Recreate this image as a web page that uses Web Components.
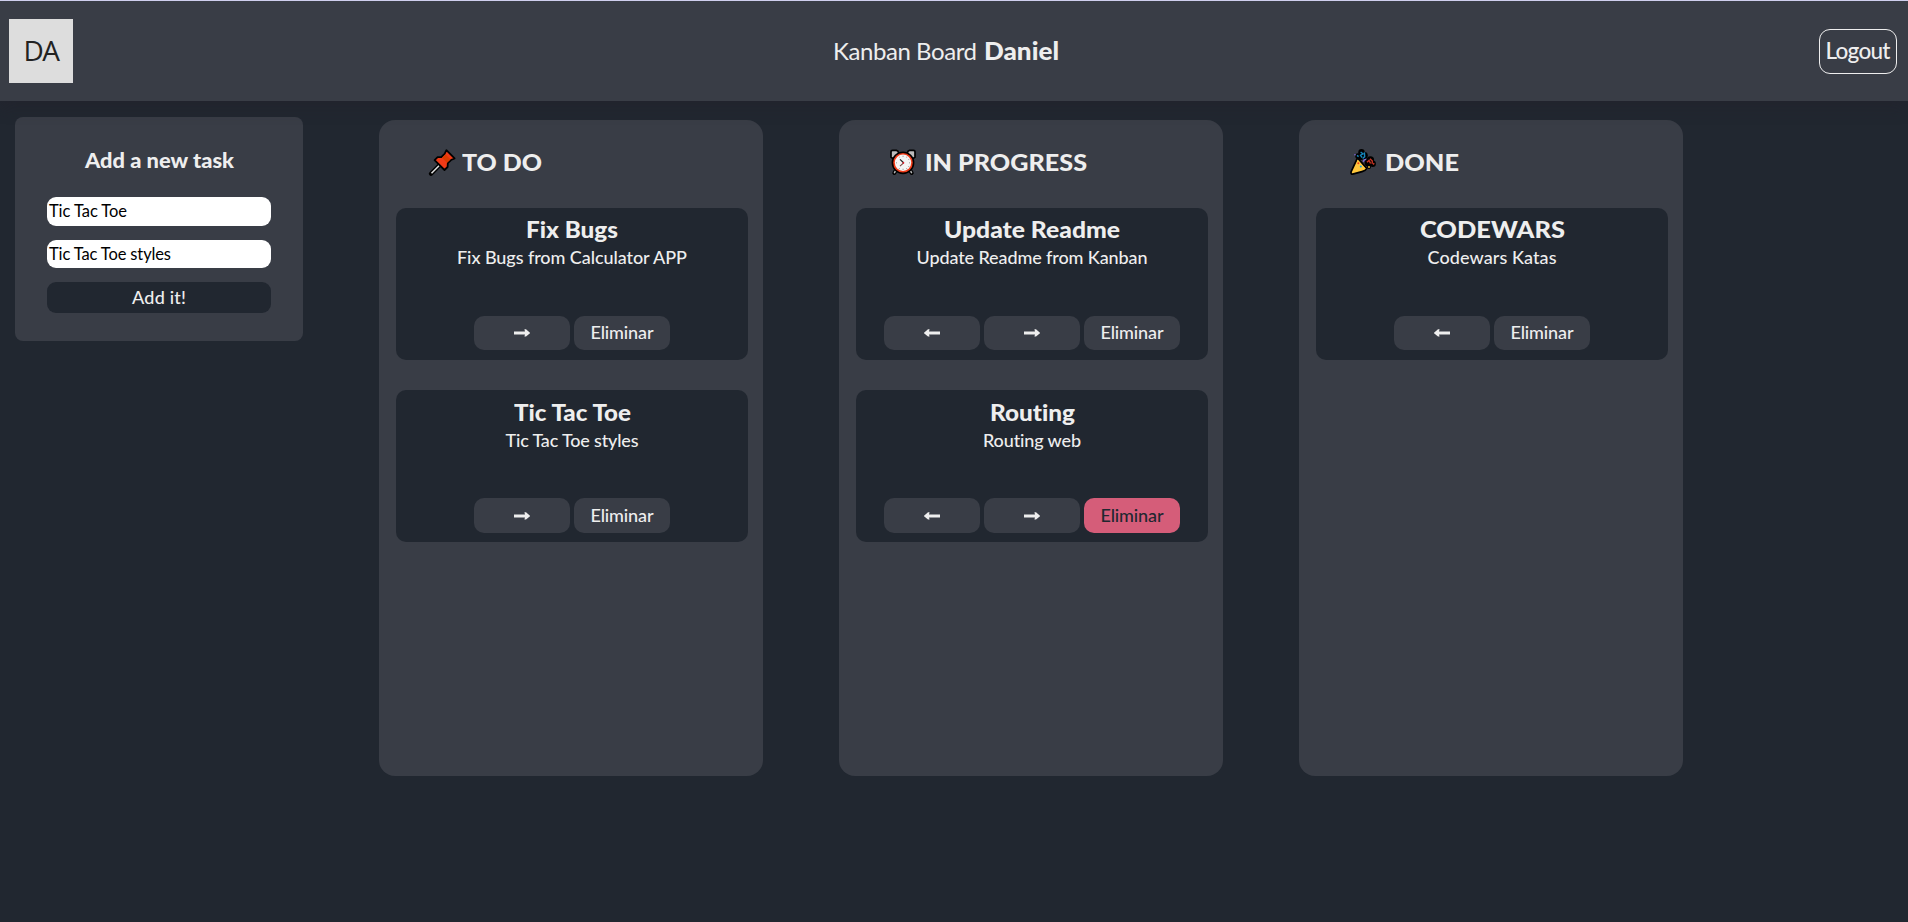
<!DOCTYPE html>
<html lang="es">
<head>
<meta charset="utf-8">
<title>Kanban Board</title>
<style>
html, body { margin: 0; height: 100%; background: #212730; overflow: hidden; }
body { font-family: Lato, "Noto Sans", sans-serif; color: #eee; font-variant-ligatures: none; }
</style>
</head>
<body>
<kanban-app></kanban-app>
<script>
const define = (name, html, setup) => {
  const tpl = document.createElement('template');
  tpl.innerHTML = html;
  customElements.define(name, class extends HTMLElement {
    connectedCallback() {
      if (this.shadowRoot) return;
      this.attachShadow({ mode: 'open' }).append(tpl.content.cloneNode(true));
      if (setup) setup(this, this.shadowRoot);
    }
  });
};

// Single-line label that occupies a set width: by tracking, or by wider letters when "wide" is set.
define('fit-text', `<style>
:host { display: inline-block; white-space: pre; font-variant-ligatures: none; }
:host([wide]) { transform-origin: 0 50%; }
</style><slot></slot>`, el => {
  const w = parseFloat(el.getAttribute('w'));
  const now = el.getBoundingClientRect().width;
  if (el.hasAttribute('wide')) {
    el.style.transform = `scaleX(${w / now})`;
    el.style.marginRight = (w - now) + 'px';
    return;
  }
  const sp = (w - now) / (el.textContent.length - 1);
  el.style.letterSpacing = sp + 'px';
  el.style.marginRight = -sp + 'px';
});

define('user-avatar', `<style>
:host { display: flex; align-items: center; justify-content: center; width: 64px; height: 64px;
  background: #ddd; color: #222; font: 400 28px/62px "Open Sans", sans-serif; }
span { position: relative; top: -1px; letter-spacing: -1.6px; }
</style><span><slot></slot></span>`);

define('logout-button', `<style>
:host { display: block; }
button { box-sizing: border-box; display: block; width: 78px; height: 45px; padding: 0 0 2px; border: 1px solid #eee;
  border-radius: 11px; background: none; color: #eee; font: 500 22.5px Lato, sans-serif; }
</style><button><fit-text w="65">Logout</fit-text></button>`);

define('app-header', `<style>
:host { display: flex; box-sizing: border-box; height: 101px; padding: 0 11px 0 9px; align-items: center;
  justify-content: space-between; background: #393d46; border-top: 1px solid #cfcfee;
  box-shadow: 0 5px 16px rgba(35,32,42,.45); position: relative; }
h1 { margin: 0; padding-bottom: 1px; font-size: 24px; line-height: 30px; font-weight: 400; display: flex; gap: 7px; }
b { font-weight: 900; }
</style>
<user-avatar>DA</user-avatar>
<h1><fit-text w="144">Kanban Board</fit-text><b><fit-text wide w="75">Daniel</fit-text></b></h1>
<logout-button></logout-button>`);

define('task-form', `<style>
:host { display: block; box-sizing: border-box; width: 288px; height: 224px; padding: 29px 32px 0;
  background: #393d46; border-radius: 8px; }
h2 { margin: 0 0 23px; height: 28px; line-height: 28px; font-size: 21px; font-weight: 900; text-align: center; }
.field { box-sizing: border-box; height: 29px; line-height: 29px; padding-left: 2px; border-radius: 9px;
  background: #fff; color: #000; font-size: 16.5px; margin-bottom: 14px; }
.field.low { height: 28px; line-height: 29px; }
button { display: block; width: 224px; height: 31px; padding: 0 0 2px; border: 0; border-radius: 9px;
  background: #212730; color: #eee; font: 500 18px Lato, sans-serif; }
</style>
<h2><fit-text wide w="149">Add a new task</fit-text></h2>
<div class="field"><fit-text w="78">Tic Tac Toe</fit-text></div>
<div class="field low"><fit-text w="122">Tic Tac Toe styles</fit-text></div>
<button><fit-text w="54">Add it!</fit-text></button>`);

define('task-button', `<style>
:host { display: block; }
button { display: flex; align-items: center; justify-content: center; width: 96px; height: 34px; padding: 0; border: 0;
  border-radius: 10px; background: #393d46; color: #eee; font: 500 18px Lato, sans-serif; }
:host([hot]) button { background: #d55d79; color: #212730; }
:host([tall]) button { height: 35px; }
fit-text { margin-bottom: 2px; }
svg { display: block; width: 16px; height: 8px; margin-bottom: 1px; }
:host([tall]) svg { margin-bottom: 0; }
:host([kind=left]) svg { transform: scaleX(-1); }
</style><button></button>`, (el, root) => {
  root.querySelector('button').innerHTML = el.getAttribute('kind') === 'delete'
    ? '<fit-text w="63">Eliminar</fit-text>'
    : '<svg viewBox="0 0 16 8"><path d="M0 2.5H11L10.4.2L12 .3L16.2 4L12 7.4L10.4 7.5L11 5.5H0Z" fill="#eee"/></svg>';
});

define('task-card', `<style>
:host { display: flex; flex-direction: column; align-items: center; box-sizing: border-box; width: 352px; height: 152px;
  padding-top: 7px; border-radius: 10px; background: #212730; }
:host([tall]) { padding-top: 8px; }
h3 { margin: 0; height: 28px; line-height: 29px; font-size: 22.5px; font-weight: 900; }
p { margin: 0; height: 28px; line-height: 28px; font-size: 18px; font-weight: 500; }
.actions { display: flex; gap: 4px; margin-top: 45px; }
:host([tall]) .actions { margin-top: 44px; }
</style><h3></h3><p></p><div class="actions"></div>`, (el, root) => {
  const a = k => el.getAttribute(k);
  root.querySelector('h3').innerHTML = `<fit-text wide w="${a('tw')}">${a('heading')}</fit-text>`;
  root.querySelector('p').innerHTML = `<fit-text w="${a('nw')}">${a('note')}</fit-text>`;
  const tall = el.hasAttribute('tall') ? 'tall' : '';
  root.querySelector('.actions').innerHTML = a('actions').split(' ').map(k =>
    `<task-button kind="${k}" ${tall} ${k === 'delete' && el.hasAttribute('hot') ? 'hot' : ''}></task-button>`).join('');
});

const icons = {
  pin: `<g stroke="#000" stroke-linejoin="round">
    <path d="M1 24.7L10.5 15.2" stroke-width="4.4" stroke-linecap="round"/>
    <path d="M1.5 24.2L11 14.7" stroke="#ddd" stroke-width="1.6"/>
    <path d="M16.4 1.2L24.6 9.4L21 11L17.8 14.2L17.6 18L14.5 21L4.6 11.1L7.6 8.2L11.4 8L14.6 4.8Z" fill="#f03a17" stroke-width="1.8"/></g>
    <path d="M15.4 5.2L20.6 10.5L17.1 13.7L12 8.7Z" fill="#da3b01"/>`,
  clock: `<g stroke="#000" stroke-linecap="round">
    <path d="M6.3 20.5L4.3 24M19.7 20.5L21.7 24" stroke-width="4"/>
    <path d="M6.3 20.5L4.5 23.6M19.7 20.5L21.5 23.6" stroke="#bbb" stroke-width="1.5"/>
    <path d="M1 8V2.8Q1 1.4 2.5 1.4H6.4Q8.3 1.8 8.6 4L3.2 9.8ZM25 8V2.8Q25 1.4 23.5 1.4H19.6Q17.7 1.8 17.4 4L22.8 9.8Z" fill="#bcbcbc" stroke-width="1.7"/>
    <circle cx="13" cy="13.8" r="10.6" fill="#f03a17" stroke-width="1.6"/></g>
    <circle cx="13" cy="13.8" r="8.2" fill="#f5f5f5"/>
    <g fill="#777"><path d="M12.6 6.8h.9v1h-.9zM12.6 19.8h.9v1h-.9zM6 13.4h1v.9H6zM19 13.4h1v.9h-1zM16.3 7.8h.8v.8h-.8zM8.9 7.8h.8v.8h-.8zM16.3 19h.8v.8h-.8zM8.9 19h.8v.8h-.8zM18.4 10h.8v.8h-.8zM18.4 17h.8v.8h-.8z"/></g>
    <path d="M10 10.4L13.6 13.8" stroke="#222" stroke-width="1.2" fill="none"/>
    <path d="M13.6 13.8L10 17.2" stroke="#7b4a45" stroke-width="1.1"/><circle cx="13.4" cy="13.8" r=".9" fill="#e81224"/>`,
  party: `<path d="M7.5 8.8L16.7 19.5Q15.8 21.5 12 22.6L2.6 25.2Q.8 25.2 1 23Z" fill="#ffc83d" stroke="#000" stroke-width="1.8" stroke-linejoin="round"/>
    <g fill="#000"><circle cx="11.5" cy="3.2" r="3.2"/><circle cx="14.4" cy="6.5" r="3.4"/><circle cx="8" cy="7" r="2.8"/><circle cx="11" cy="8" r="3"/><circle cx="20.4" cy="11" r="3.7"/><circle cx="22.7" cy="14.7" r="3.2"/><circle cx="18" cy="14" r="3.4"/><circle cx="19" cy="18" r="2"/></g>
    <path d="M7.6 10.8L15.6 19.8L4 23.2Z" fill="#ffc83d"/>
    <path d="M10.6 3L13 4.8L10.5 6.2L12 8.5M14.4 3.4L14.7 7.6L12.6 9.5M7 6.4L8.6 7.6" stroke="#1587bd" stroke-width="1.4" fill="none"/>
    <path d="M17 13.2L19 11.4L20.6 14.5M20 9.8L22.3 12L22.2 14.8M24 14L23.3 15.6" stroke="#c93422" stroke-width="1.4" fill="none"/>
    <path d="M13.2 12.7Q14 10.2 16 10.4" stroke="#886ce4" stroke-width="1.3" fill="none"/>
    <circle cx="8.3" cy="14.3" r="1" fill="#f03a17"/><circle cx="10.8" cy="17.6" r="1" fill="#00a6ed"/><circle cx="5" cy="5.8" r=".8" fill="#886ce4"/><circle cx="19" cy="18" r=".9" fill="#ffc83d"/>`
};

define('board-column', `<style>
:host { display: block; box-sizing: border-box; width: 384px; height: 656px; padding: 25px 15px 0 17px;
  border-radius: 16px; background: #393d46; }
h2 { display: flex; align-items: center; margin: 0 0 28px; padding-left: 34px; height: 35px; line-height: 35px;
  font-size: 22.5px; font-weight: 900; }
svg { width: 26px; height: 26px; margin-bottom: 1px; overflow: visible; }
.list { display: grid; row-gap: 30px; }
</style><h2></h2><div class="list"><slot></slot></div>`, (el, root) => {
  const a = k => el.getAttribute(k);
  root.querySelector('h2').innerHTML =
    `<svg viewBox="0 0 26 26" fill="none">${icons[a('icon')]}</svg><fit-text wide w="${a('w')}" style="margin-left:${a('gap')}px">${a('heading')}</fit-text>`;
});

define('kanban-app', `<style>
:host { display: block; height: 922px; overflow: hidden; }
main { display: flex; align-items: flex-start; padding: 16px 0 0 15px; }
.board { display: flex; gap: 76px; margin: 3px 0 0 76px; }
</style>
<app-header></app-header>
<main>
  <task-form></task-form>
  <section class="board">
    <board-column icon="pin" heading="TO DO" w="80" gap="6">
      <task-card heading="Fix Bugs" tw="92" note="Fix Bugs from Calculator APP" nw="230" actions="right delete"></task-card>
      <task-card tall heading="Tic Tac Toe" tw="117" note="Tic Tac Toe styles" nw="133" actions="right delete"></task-card>
    </board-column>
    <board-column icon="clock" heading="IN PROGRESS" w="162" gap="9">
      <task-card heading="Update Readme" tw="176" note="Update Readme from Kanban" nw="231" actions="left right delete"></task-card>
      <task-card tall hot heading="Routing" tw="85" note="Routing web" nw="98" actions="left right delete"></task-card>
    </board-column>
    <board-column icon="party" heading="DONE" w="74" gap="9">
      <task-card heading="CODEWARS" tw="145" note="Codewars Katas" nw="129" actions="left delete"></task-card>
    </board-column>
  </section>
</main>`);
</script>
</body>
</html>
